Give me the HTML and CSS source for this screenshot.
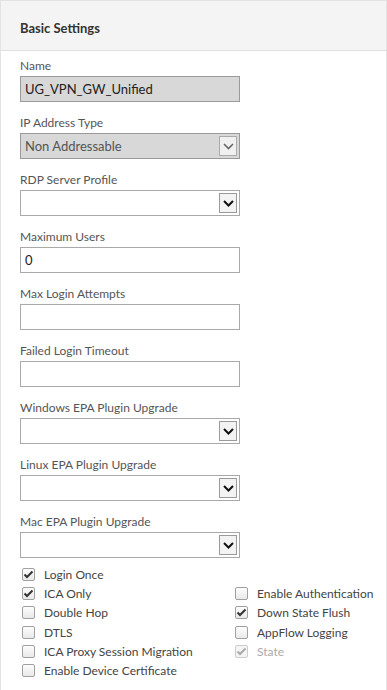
FILE: index.html
```html
<!doctype html>
<html>
<head>
  <link rel="stylesheet" href="styles.css">
</head>
<body>
  <div class="panel">
    <div class="panel-head">Basic Settings</div>
    <div class="panel-body">
      <div class="fields">
        <div class="field">
          <label>Name</label>
          <div class="input disabled">UG_VPN_GW_Unified</div>
        </div>
        <div class="field">
          <label>IP Address Type</label>
          <div class="select disabled">Non Addressable<span class="arrow"><svg width="11" height="7" viewBox="0 0 11 7"><path d="M1 1 L5.5 5.5 L10 1" fill="none" stroke="#666" stroke-width="1.6"/></svg></span></div>
        </div>
        <div class="field">
          <label>RDP Server Profile</label>
          <div class="select"><span class="arrow"><svg width="11" height="7" viewBox="0 0 11 7"><path d="M1 1 L5.5 5.5 L10 1" fill="none" stroke="#111" stroke-width="2"/></svg></span></div>
        </div>
        <div class="field">
          <label>Maximum Users</label>
          <div class="input">0</div>
        </div>
        <div class="field">
          <label>Max Login Attempts</label>
          <div class="input"></div>
        </div>
        <div class="field">
          <label>Failed Login Timeout</label>
          <div class="input"></div>
        </div>
        <div class="field">
          <label>Windows EPA Plugin Upgrade</label>
          <div class="select"><span class="arrow"><svg width="11" height="7" viewBox="0 0 11 7"><path d="M1 1 L5.5 5.5 L10 1" fill="none" stroke="#111" stroke-width="2"/></svg></span></div>
        </div>
        <div class="field">
          <label>Linux EPA Plugin Upgrade</label>
          <div class="select"><span class="arrow"><svg width="11" height="7" viewBox="0 0 11 7"><path d="M1 1 L5.5 5.5 L10 1" fill="none" stroke="#111" stroke-width="2"/></svg></span></div>
        </div>
        <div class="field">
          <label>Mac EPA Plugin Upgrade</label>
          <div class="select"><span class="arrow"><svg width="11" height="7" viewBox="0 0 11 7"><path d="M1 1 L5.5 5.5 L10 1" fill="none" stroke="#111" stroke-width="2"/></svg></span></div>
        </div>
      </div>

      <div class="checks">
        <div class="check on"><span class="box"><svg width="11" height="9" viewBox="0 0 11 9"><path d="M1.5 4.5 L4 7 L9.5 1.5" fill="none" stroke="#333" stroke-width="2"/></svg></span>Login Once</div>
        <div></div>
        <div class="check on"><span class="box"><svg width="11" height="9" viewBox="0 0 11 9"><path d="M1.5 4.5 L4 7 L9.5 1.5" fill="none" stroke="#333" stroke-width="2"/></svg></span>ICA Only</div>
        <div class="check"><span class="box"></span>Enable Authentication</div>
        <div class="check"><span class="box"></span>Double Hop</div>
        <div class="check on"><span class="box"><svg width="11" height="9" viewBox="0 0 11 9"><path d="M1.5 4.5 L4 7 L9.5 1.5" fill="none" stroke="#333" stroke-width="2"/></svg></span>Down State Flush</div>
        <div class="check"><span class="box"></span>DTLS</div>
        <div class="check"><span class="box"></span>AppFlow Logging</div>
        <div class="check"><span class="box"></span>ICA Proxy Session Migration</div>
        <div class="check off"><span class="box"><svg width="11" height="9" viewBox="0 0 11 9"><path d="M1.5 4.5 L4 7 L9.5 1.5" fill="none" stroke="#aaa" stroke-width="2"/></svg></span>State</div>
        <div class="check"><span class="box"></span>Enable Device Certificate</div>
      </div>
    </div>
  </div>
</body>
</html>
```

FILE: styles.css
```css
html, body {
  margin: 0;
  height: 100%;
  background: #fff;
  font-family: "Segoe UI", Lato, "Open Sans", sans-serif;
  font-size: 12px;
  color: #444;
}
.panel {
  height: 100%;
  box-sizing: border-box;
  border: 1px solid #e3e3e3;
  border-bottom: none;
}
.panel-head {
  height: 50px;
  box-sizing: border-box;
  padding: 19px 0 0 19px;
  background: #f4f4f4;
  border-bottom: 1px solid #e0e0e0;
  font-weight: bold;
  font-size: 13px;
  color: #333;
}
.panel-body {
  padding: 7px 0 0 19px;
}
.fields {
  display: flex;
  flex-direction: column;
  gap: 13px;
}
.field label {
  display: block;
  height: 18px;
  color: #555;
}
.input, .select {
  position: relative;
  width: 220px;
  height: 26px;
  box-sizing: border-box;
  border: 1px solid #a9a9a9;
  padding: 4px 0 0 4px;
  font-size: 13px;
  color: #222;
  background: #fff;
}
.disabled {
  background: #d8d8d8;
  border-color: #9a9a9a;
  color: #555;
}
.input.disabled {
  color: #222;
}
.arrow {
  position: absolute;
  right: 2px;
  top: 2px;
  width: 18px;
  height: 20px;
  box-sizing: border-box;
  border: 1px solid #9a9a9a;
  background: #f3f3f3;
  display: flex;
  align-items: center;
  justify-content: center;
}
.select.disabled .arrow {
  border-color: #aaa;
  background: #f0f0f0;
}
.checks {
  display: grid;
  grid-template-columns: 213px 1fr;
  grid-auto-rows: 19.2px;
  margin-top: 7px;
  padding-left: 2px;
}
.check {
  display: flex;
  align-items: center;
  color: #444;
}
.check .box {
  width: 13px;
  height: 13px;
  box-sizing: border-box;
  border: 1px solid #a0a0a0;
  border-radius: 2px;
  background: linear-gradient(#fdfdfd, #e9e9e9);
  margin-right: 9px;
  display: flex;
  align-items: center;
  justify-content: center;
}
.check.off {
  color: #aaa;
}
.check.off .box {
  border-color: #ccc;
  background: #f4f4f4;
}
```
